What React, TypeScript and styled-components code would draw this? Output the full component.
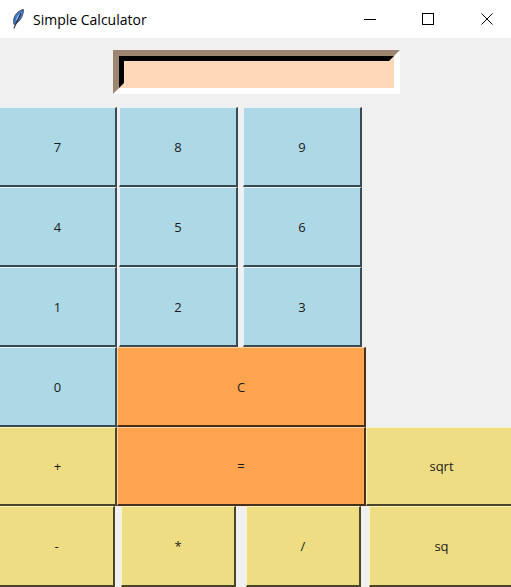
import {FC} from "react";
import styled, {createGlobalStyle} from "styled-components";

const GlobalStyle = createGlobalStyle`
  html, body {
    margin: 0;
    padding: 0;
    background: #f0f0f0;
  }
  body {
    width: 511px;
    height: 587px;
    overflow: hidden;
    font-family: "Open Sans", "Liberation Sans", sans-serif;
  }
`;

const TitleBar = styled.div`
  display: flex;
  align-items: center;
  height: 38px;
  padding-right: 18px;
  background: #fff;
`;

const AppIcon = styled.svg`
  width: 12px;
  height: 20px;
  margin-left: 12px;
  flex: none;
`;

const Title = styled.span`
  margin-left: 9px;
  font-size: 14px;
  color: #000;
  flex: 1;
`;

const WindowButton = styled.div<{$gap: number}>`
  width: 12px;
  height: 12px;
  margin-left: ${({$gap}) => $gap}px;
  svg {
    display: block;
  }
`;

const Display = styled.div`
  display: flex;
  padding: 12px 111px 13px 113px;
`;

const Entry = styled.div`
  box-sizing: border-box;
  width: 287px;
  height: 44px;
  border-style: solid;
  border-width: 6px;
  border-color: #9c8672 #fff #fff #9c8672;
`;

const EntryWell = styled.div`
  box-sizing: border-box;
  height: 100%;
  border-style: solid;
  border-width: 5px;
  border-color: #000 #fed8b8 #fed8b8 #000;
  background: #fed8b8;
`;

const Keypad = styled.div`
  display: flex;
  flex-direction: column;
`;

const Row = styled.div<{$columns: string; $height: number}>`
  display: grid;
  grid-template-columns: ${({$columns}) => $columns};
  height: ${({$height}) => $height}px;
`;

const tints = {
  blue: {face: '#add8e6', light: '#e6f4f8', dark: '#3b4a50'},
  orange: {face: '#ffa54f', light: '#ffd3a8', dark: '#4a3018'},
  khaki: {face: '#eedd82', light: '#fbf5c6', dark: '#4a4528'},
};

type Tint = keyof typeof tints;

const Key = styled.button<{$tint: Tint; $open?: 'left' | 'right'}>`
  box-sizing: border-box;
  margin: 0;
  padding: 0;
  min-width: 0;
  height: 100%;
  border-style: solid;
  border-width: 1px 2px 2px 1px;
  border-color: ${({$tint}) => `${tints[$tint].light} ${tints[$tint].dark} ${tints[$tint].dark} ${tints[$tint].light}`};
  ${({$open}) => $open === 'left' && 'border-left: none;'}
  ${({$open}) => $open === 'right' && 'border-right: none;'}
  background: ${({$tint}) => tints[$tint].face};
  font-family: "Open Sans", "Liberation Sans", sans-serif;
  font-size: 13px;
  color: #1a1a1a;
`;

const Spacer = styled.div``;

const Feather: FC = () => (
  <AppIcon viewBox="0 0 12 20">
    <path d="M11.5 .5 C7.5 1 3.5 4.5 2 9 C1.3 11.5 1.3 13.5 2 15.5 C5.5 14.5 8.5 11 10 7.5 C11 5 11.6 2.8 11.5 .5Z" fill="#3f74c4" stroke="#39465a" strokeWidth=".8"/>
    <path d="M9.5 3.5 C7 5.5 5.2 8 4.5 11" stroke="#9cc0ea" strokeWidth="1.2" fill="none"/>
    <path d="M9 4 L1.8 19.5" stroke="#2a2f38" strokeWidth="1.1" fill="none"/>
  </AppIcon>
);

const blueRow = "117px 2px 119px 5px 119px 1fr";

const App: FC = () => (
  <>
    <GlobalStyle/>
    <TitleBar>
      <Feather/>
      <Title>Simple Calculator</Title>
      <WindowButton $gap={0}>
        <svg width="12" height="12" viewBox="0 0 12 12"><path d="M0 6.5H12" stroke="#000"/></svg>
      </WindowButton>
      <WindowButton $gap={46}>
        <svg width="12" height="12" viewBox="0 0 12 12"><rect x=".5" y=".5" width="11" height="11" fill="none" stroke="#000"/></svg>
      </WindowButton>
      <WindowButton $gap={47}>
        <svg width="12" height="12" viewBox="0 0 12 12"><path d="M.5.5L11.5 11.5M11.5.5L.5 11.5" stroke="#000"/></svg>
      </WindowButton>
    </TitleBar>
    <Display>
      <Entry><EntryWell/></Entry>
    </Display>
    <Keypad>
      {[['7', '8', '9'], ['4', '5', '6'], ['1', '2', '3']].map((keys) => (
        <Row key={keys[0]} $columns={blueRow} $height={80}>
          <Key $tint="blue" $open="left">{keys[0]}</Key>
          <Spacer/>
          <Key $tint="blue">{keys[1]}</Key>
          <Spacer/>
          <Key $tint="blue">{keys[2]}</Key>
        </Row>
      ))}
      <Row $columns="117px 249px 1fr" $height={80}>
        <Key $tint="blue" $open="left">0</Key>
        <Key $tint="orange">C</Key>
      </Row>
      <Row $columns="117px 249px 150px" $height={79}>
        <Key $tint="khaki" $open="left">+</Key>
        <Key $tint="orange">=</Key>
        <Key $tint="khaki" $open="right">sqrt</Key>
      </Row>
      <Row $columns="115px 6px 115px 10px 115px 8px 144px" $height={81}>
        <Key $tint="khaki" $open="left">-</Key>
        <Spacer/>
        <Key $tint="khaki">*</Key>
        <Spacer/>
        <Key $tint="khaki">/</Key>
        <Spacer/>
        <Key $tint="khaki" $open="right">sq</Key>
      </Row>
    </Keypad>
  </>
);

export default App;
